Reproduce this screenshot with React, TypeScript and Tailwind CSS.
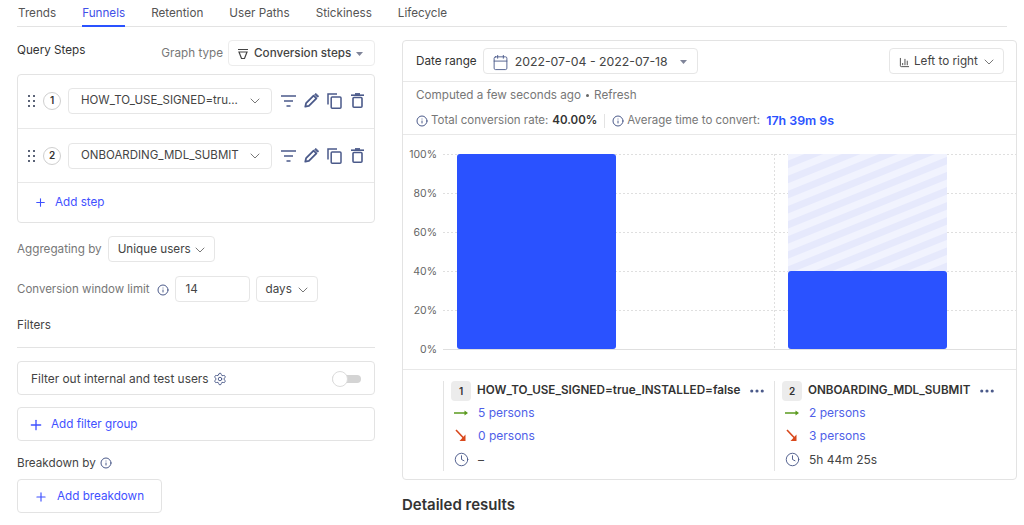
import React from "react";
import { ChevronDown, Plus, Info, Settings, Calendar, Clock, ChartColumn, Ellipsis } from "lucide-react";

const tabs = ["Trends", "Funnels", "Retention", "User Paths", "Stickiness", "Lifecycle"];
const iconColor = "#4b5a8a";

const Caret = () => (
  <svg width="7" height="4" viewBox="0 0 7 4" className="shrink-0">
    <path d="M0 0h7L3.500 4z" fill="#7f8499" />
  </svg>
);

const FunnelLines = () => (
  <svg width="15" height="12" viewBox="0 0 15 12" fill="none" stroke={iconColor} strokeWidth="1.6">
    <path d="M0 1h15M3 6h9M5.500 11h4" />
  </svg>
);

const PencilIcon = () => (
  <svg width="15" height="15" viewBox="0 0 15 15" fill="none">
    <path d="M1.300 13.700l.8-3.600 7.500-7.500 2.800 2.800-7.500 7.500z" stroke={iconColor} strokeWidth="1.800" strokeLinejoin="round" />
    <path d="M10.800 1.400l1-1 2.800 2.800-1 1z" fill={iconColor} stroke={iconColor} />
  </svg>
);

const CopyIcon = () => (
  <svg width="15" height="16" viewBox="0 0 15 16" fill="none" stroke={iconColor} strokeWidth="1.500">
    <path d="M1 11.500V1h9" />
    <rect x="4.200" y="4" width="9.800" height="11.200" rx="1" />
  </svg>
);

const TrashIcon = () => (
  <svg width="13" height="15" viewBox="0 0 13 15" fill="none" stroke={iconColor} strokeWidth="1.600">
    <path d="M0 2.200h13" />
    <path d="M4 1h5" strokeWidth="1.800" />
    <rect x="2" y="4.500" width="9" height="9.700" rx="1" />
  </svg>
);

const Grip = () => (
  <svg width="8" height="12" viewBox="0 0 8 12" fill="#5b6478" className="shrink-0">
    <rect x="0" y="0" width="2" height="2" />
    <rect x="5" y="0" width="2" height="2" />
    <rect x="0" y="5" width="2" height="2" />
    <rect x="5" y="5" width="2" height="2" />
    <rect x="0" y="10" width="2" height="2" />
    <rect x="5" y="10" width="2" height="2" />
  </svg>
);

const Step = ({ num, name, className }: { num: number; name: string; className?: string }) => (
  <div className={`flex h-[54px] items-center border-b border-[#e8e8e8] pl-[10px] ${className ?? ""}`}>
    <Grip />
    <div className="ml-[7px] flex h-[18px] w-[18px] items-center justify-center rounded-full border border-[#cfcfcf] text-[10px] font-semibold text-[#333]">
      {num}
    </div>
    <div className="ml-[7px] flex h-[26px] w-[204px] items-center justify-between rounded border border-[#e6e6e6] pl-[12px] pr-[8px] text-[11.5px] text-[#444]">
      <span className="whitespace-nowrap">{name}</span>
      <ChevronDown size={16} color="#555" strokeWidth={1.2} />
    </div>
    <div className="ml-[9px] flex items-center">
      <FunnelLines />
      <div className="ml-[8px]"><PencilIcon /></div>
      <div className="ml-[8px]"><CopyIcon /></div>
      <div className="ml-[9px]"><TrashIcon /></div>
    </div>
  </div>
);

const Select = ({ label, className }: { label: string; className: string }) => (
  <div className={`flex h-[26px] items-center justify-between rounded border border-[#e6e6e6] pt-[2px] text-[#444] ${className}`}>
    <span>{label}</span>
    <ChevronDown size={16} color="#555" strokeWidth={1.2} />
  </div>
);

const AddButton = ({ label, size, gap, className }: { label: string; size: number; gap: string; className: string }) => (
  <div className={`flex h-[34px] items-center rounded border border-[#e3e3e3] pt-[2px] text-[#3f51ff] ${className}`}>
    <Plus size={size} color="#3f51ff" strokeWidth={2} />
    <span className={gap}>{label}</span>
  </div>
);

const Chart = () => {
  const ticks = [100, 80, 60, 40, 20, 0];
  return (
    <svg width="613" height="234" className="block">
      <defs>
        <pattern id="stripes" width="40" height="14" patternUnits="userSpaceOnUse" patternTransform="rotate(-22)">
          <rect width="40" height="14" fill="#f1f3fe" />
          <rect width="40" height="7" fill="#e6e9fc" />
        </pattern>
      </defs>
      {ticks.map((t, i) => (
        <g key={t}>
          <text x="34" y={23 + i * 39} textAnchor="end" fontSize="10.5" fill="#666">
            {t}%
          </text>
          <line x1="40" x2="613" y1={19.5 + i * 39} y2={19.5 + i * 39} stroke="#dfdfdf" strokeDasharray={t === 0 ? undefined : "2 2"} />
        </g>
      ))}
      <line x1="371.5" x2="371.5" y1="19" y2="214" stroke="#dfdfdf" strokeDasharray="2 2" />
      <rect x="54" y="19" width="159" height="195" rx="3" fill="#2a52ff" />
      <rect x="385" y="19" width="159" height="118" fill="url(#stripes)" />
      <rect x="385" y="136" width="159" height="78" rx="3" fill="#2a52ff" />
    </svg>
  );
};

const Stat = ({ num, name, enter, drop, time, width }: { num: number; name: string; enter: string; drop: string; time: string; width: string }) => (
  <div className={`h-[90px] border-l border-[#e3e3e3] pl-[7px] ${width}`}>
    <div className="flex h-[20px] items-center">
      <div className="flex h-[20px] w-[20px] items-center justify-center rounded bg-[#ececec] text-[10px] font-semibold text-[#333]">{num}</div>
      <span className="ml-[6px] whitespace-nowrap text-[11.7px] font-semibold text-[#333]">{name}</span>
      <Ellipsis size={18} color={iconColor} strokeWidth={2.2} className="ml-[8px]" />
    </div>
    <div className="flex h-[23px] items-center text-[12px] text-[#4f5fe8]">
      <svg width="14" height="8" viewBox="0 0 14 8" className="ml-[3px]">
        <path d="M0 4h11" stroke="#5a9a1e" strokeWidth="1.500" />
        <path d="M10.500 1.500L14 4l-3.500 2.500z" fill="#5a9a1e" />
      </svg>
      <span className="ml-[10px]">{enter}</span>
    </div>
    <div className="flex h-[23px] items-center text-[12px] text-[#4f5fe8]">
      <svg width="14" height="13" viewBox="0 0 14 13" className="ml-[3px]">
        <path d="M2 1l8 8.500" stroke="#d9481c" strokeWidth="1.600" />
        <path d="M11.500 5.500V12H5.500z" fill="#d9481c" />
      </svg>
      <span className="ml-[10px]">{drop}</span>
    </div>
    <div className="flex h-[23px] items-center pt-[2px] text-[12px] text-[#444]">
      <Clock size={15} color={iconColor} strokeWidth={1.5} className="ml-[3px]" />
      <span className="ml-[9px]">{time}</span>
    </div>
  </div>
);

export default function App() {
  return (
    <div className="h-[525px] w-[1024px] overflow-hidden bg-white px-[17px] font-['Inter',sans-serif] text-[11.7px] text-[#444]">
      <div className="flex h-[27px] items-start border-b border-[#e3e3e3] pl-px">
        {tabs.map((tab) => (
          <div
            key={tab}
            className={`mr-[26px] h-[27px] pt-[5px] leading-[16px] ${tab === "Funnels" ? "border-b-2 border-[#2a52ff] text-[#3f51e8]" : "text-[#555]"}`}
          >
            {tab}
          </div>
        ))}
      </div>

      <div className="mt-[13px] flex items-start gap-[27px]">
        <div className="w-[358px] shrink-0">
          <div className="flex h-[26px] items-start justify-between">
            <span className="mt-px leading-[18px] text-[#333]">Query Steps</span>
            <div className="flex items-center">
              <span className="mr-[5px] pt-[2px] text-[#777]">Graph type</span>
              <div className="flex h-[26px] w-[147px] items-center rounded border border-[#ececec] pl-[8px] pr-[11px] pt-[2px]">
                <svg width="12" height="12" viewBox="0 0 12 12" fill="none" stroke="#444" strokeWidth="1.200">
                  <path d="M1 1.500h10M2 4h8M4.500 10.500h3L10 4H2z" />
                </svg>
                <span className="ml-[5px] flex-1 whitespace-nowrap font-medium text-[#444]">Conversion steps</span>
                <Caret />
              </div>
            </div>
          </div>

          <div className="mt-[8px] rounded border border-[#e3e3e3]">
            <Step num={1} name="HOW_TO_USE_SIGNED=tru..." className="pb-[2px]" />
            <Step num={2} name="ONBOARDING_MDL_SUBMIT" />
            <div className="flex h-[39px] items-center pl-[16px] text-[#3f51ff]">
              <Plus size={13} color="#3f51ff" strokeWidth={2} />
              <span className="ml-[8px]">Add step</span>
            </div>
          </div>

          <div className="mt-[13px] flex items-center">
            <span className="mr-[6px] pt-[2px] text-[#777]">Aggregating by</span>
            <Select label="Unique users" className="w-[107px] pl-[9px] pr-[6px]" />
          </div>

          <div className="mt-[14px] flex items-center">
            <span className="pt-[2px] text-[11.5px] text-[#777]">Conversion window limit</span>
            <Info size={12} color={iconColor} className="ml-[7px] mt-[2px]" />
            <div className="ml-[6px] flex h-[26px] w-[75px] items-center rounded border border-[#e6e6e6] pl-[10px] pt-[2px]">14</div>
            <Select label="days" className="ml-[6px] w-[62px] pl-[9px] pr-[6px]" />
          </div>

          <div className="mt-[14px] border-b border-[#e3e3e3] pb-[13px] leading-[18px] text-[#444]">Filters</div>

          <div className="mt-[13px] flex h-[34px] items-center justify-between rounded border border-[#e3e3e3] pl-[13px] pr-[13px] pt-[2px]">
            <div className="flex items-center">
              <span className="text-[11.9px]">Filter out internal and test users</span>
              <Settings size={14} color={iconColor} strokeWidth={1.6} className="ml-[4px]" />
            </div>
            <div className="relative h-[8px] w-[29px] rounded-full bg-[#d4d4d4]">
              <div className="absolute left-0 top-[-4px] h-[16px] w-[16px] rounded-full border border-[#dcdcdc] bg-white" />
            </div>
          </div>

          <AddButton label="Add filter group" size={16} gap="ml-[7px]" className="mt-[12px] pl-[10px]" />

          <div className="mt-[13px] flex items-center leading-[18px] text-[#444]">
            <span>Breakdown by</span>
            <Info size={12} color={iconColor} className="ml-[4px]" />
          </div>

          <AddButton label="Add breakdown" size={14} gap="ml-[9px]" className="mt-[7px] w-[145px] pl-[16px]" />
        </div>

        <div className="w-[615px] shrink-0">
          <div className="rounded border border-[#e3e3e3]">
            <div className="flex h-[41px] items-center justify-between border-b border-[#e8e8e8] pl-[13px] pr-[12px]">
              <div className="flex items-center">
                <span className="pt-[2px] text-[#333]">Date range</span>
                <div className="ml-[6px] flex h-[26px] w-[215px] items-center rounded border border-[#e6e6e6] pl-[8px] pr-[10px] pt-[2px]">
                  <Calendar size={17} color={iconColor} strokeWidth={1.3} />
                  <span className="ml-[6px] flex-1 whitespace-nowrap text-[12.3px]">2022-07-04 - 2022-07-18</span>
                  <Caret />
                </div>
              </div>
              <div className="flex h-[26px] w-[115px] items-center rounded border border-[#e6e6e6] pl-[9px] pr-[6px] pt-[2px]">
                <ChartColumn size={11} color="#444" />
                <span className="ml-[4px] flex-1 whitespace-nowrap">Left to right</span>
                <ChevronDown size={16} color="#555" strokeWidth={1.2} />
              </div>
            </div>

            <div className="flex h-[53px] flex-col border-b border-[#e8e8e8] pl-[13px] text-[#777]">
              <div className="mt-[4px] flex h-[18px] items-center pt-px">
                Computed a few seconds ago
                <span className="mx-[5px] h-[3px] w-[3px] rounded-full bg-[#666]" />
                Refresh
              </div>
              <div className="mt-[8px] flex h-[18px] items-center text-[11.5px]">
                <Info size={12} color={iconColor} />
                <span className="ml-[3px]">Total conversion rate:</span>
                <b className="ml-[4px] font-semibold text-[#333]">40.00%</b>
                <span className="mx-[7px] h-[14px] border-l border-[#e3e3e3]" />
                <Info size={12} color={iconColor} />
                <span className="ml-[3px]">Average time to convert:</span>
                <b className="ml-[6px] text-[12.400px] font-semibold text-[#2a52ff]">17h 39m 9s</b>
              </div>
            </div>

            <div className="h-[235px] border-b border-[#e8e8e8]">
              <Chart />
            </div>

            <div className="flex h-[109px] pl-[40px] pt-[11px]">
              <Stat num={1} name="HOW_TO_USE_SIGNED=true_INSTALLED=false" enter="5 persons" drop="0 persons" time="–" width="w-[331px] shrink-0" />
              <Stat num={2} name="ONBOARDING_MDL_SUBMIT" enter="2 persons" drop="3 persons" time="5h 44m 25s" width="flex-1" />
            </div>
          </div>

          <div className="mt-[14px] text-[15px] font-semibold leading-[22px] text-[#333]">Detailed results</div>
        </div>
      </div>
    </div>
  );
}
